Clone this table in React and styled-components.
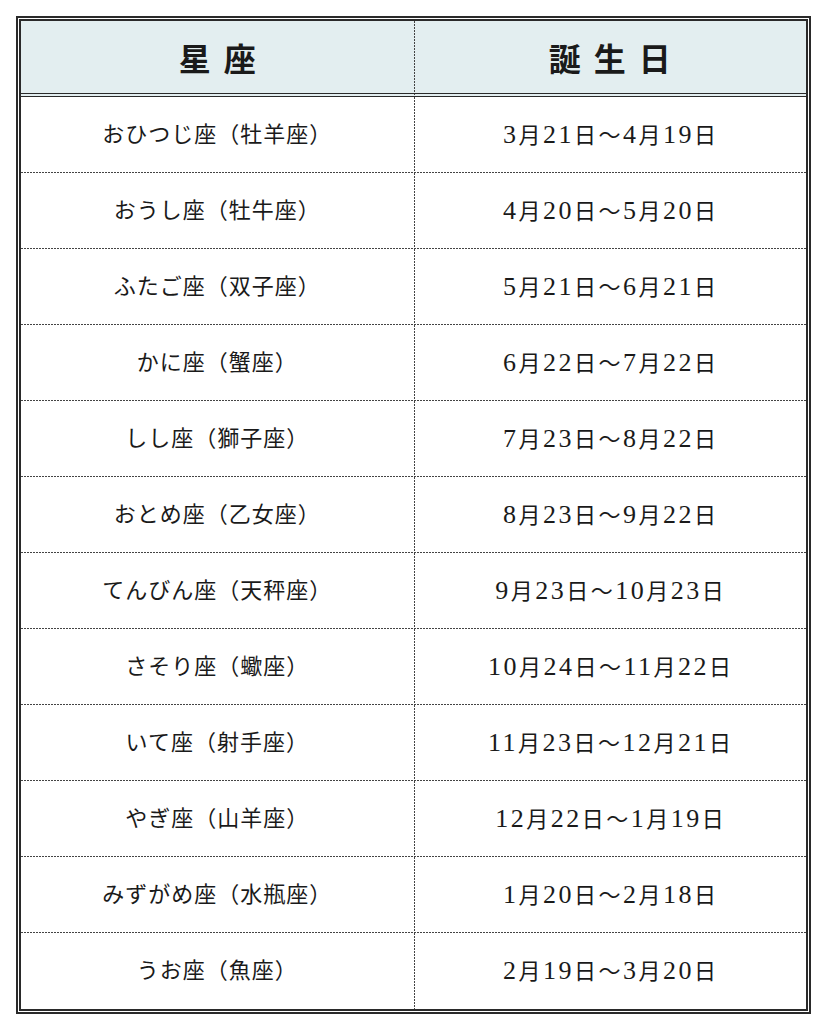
import styled, { createGlobalStyle } from "styled-components";

const GlobalStyle = createGlobalStyle`
  body {
    margin: 0;
    background: #fff;
    font-family: "Liberation Serif", "Noto Sans CJK JP", serif;
    color: #1a1a1a;
  }
`;

const dotsX = "linear-gradient(to right, #444 0 2px, transparent 2px 3px)";
const dotsY = "linear-gradient(to bottom, #444 0 2px, transparent 2px 3px)";

const StyledPage = styled.div`
  padding: 16px 17px 0 16px;
`;

const StyledTable = styled.table`
  width: 795px;
  border: 5px double #2a2a2a;
  border-spacing: 0;
  border-collapse: separate;
  table-layout: fixed;
`;

const StyledHeadCell = styled.th`
  height: 72px;
  padding: 0;

  background-color: #e3eef0;
  background-image: ${({ isRight }) => (isRight ? dotsY : "none")};
  background-size: 1px 3px;
  background-repeat: repeat-y;
  background-position: left top;
  border-bottom: 4px double #2a2a2a;

  font-size: 32px;
  font-weight: 700;
  letter-spacing: 13px;
  text-indent: 13px;
  text-align: center;
`;

const StyledCell = styled.td`
  height: 76px;
  padding: 0;

  background-image: ${({ isRight, isLast }) =>
    [isLast ? null : dotsX, isRight ? dotsY : null].filter(Boolean).join(", ") ||
    "none"};
  background-size: ${({ isRight, isLast }) =>
    [isLast ? null : "3px 1px", isRight ? "1px 3px" : null]
      .filter(Boolean)
      .join(", ") || "auto"};
  background-repeat: ${({ isRight, isLast }) =>
    [isLast ? null : "repeat-x", isRight ? "repeat-y" : null]
      .filter(Boolean)
      .join(", ") || "no-repeat"};
  background-position: ${({ isRight, isLast }) =>
    [isLast ? null : "left bottom", isRight ? "left top" : null]
      .filter(Boolean)
      .join(", ") || "0 0"};

  font-size: 22px;
  line-height: 30px;
  letter-spacing: ${({ isRight }) => (isRight ? "2.5px" : "1px")};
  text-indent: ${({ isRight }) => (isRight ? "2px" : "0")};
  text-align: center;
  vertical-align: middle;
`;

const StyledNum = styled.span`
  font-size: 26px;
`;

const signs = [
  ["おひつじ座（牡羊座）", "3月21日～4月19日"],
  ["おうし座（牡牛座）", "4月20日～5月20日"],
  ["ふたご座（双子座）", "5月21日～6月21日"],
  ["かに座（蟹座）", "6月22日～7月22日"],
  ["しし座（獅子座）", "7月23日～8月22日"],
  ["おとめ座（乙女座）", "8月23日～9月22日"],
  ["てんびん座（天秤座）", "9月23日～10月23日"],
  ["さそり座（蠍座）", "10月24日～11月22日"],
  ["いて座（射手座）", "11月23日～12月21日"],
  ["やぎ座（山羊座）", "12月22日～1月19日"],
  ["みずがめ座（水瓶座）", "1月20日～2月18日"],
  ["うお座（魚座）", "2月19日～3月20日"],
];

const renderDates = (text) =>
  text
    .split(/(\d+)/)
    .filter(Boolean)
    .map((part, i) =>
      /\d/.test(part) ? <StyledNum key={i}>{part}</StyledNum> : part
    );

const App = () => {
  return (
    <StyledPage>
      <GlobalStyle />
      <StyledTable>
        <thead>
          <tr>
            <StyledHeadCell>星座</StyledHeadCell>
            <StyledHeadCell isRight>誕生日</StyledHeadCell>
          </tr>
        </thead>
        <tbody>
          {signs.map(([name, dates], i) => {
            const isLast = i === signs.length - 1;

            return (
              <tr key={name}>
                <StyledCell isLast={isLast}>{name}</StyledCell>
                <StyledCell isRight isLast={isLast}>
                  {renderDates(dates)}
                </StyledCell>
              </tr>
            );
          })}
        </tbody>
      </StyledTable>
    </StyledPage>
  );
};

export default App;
